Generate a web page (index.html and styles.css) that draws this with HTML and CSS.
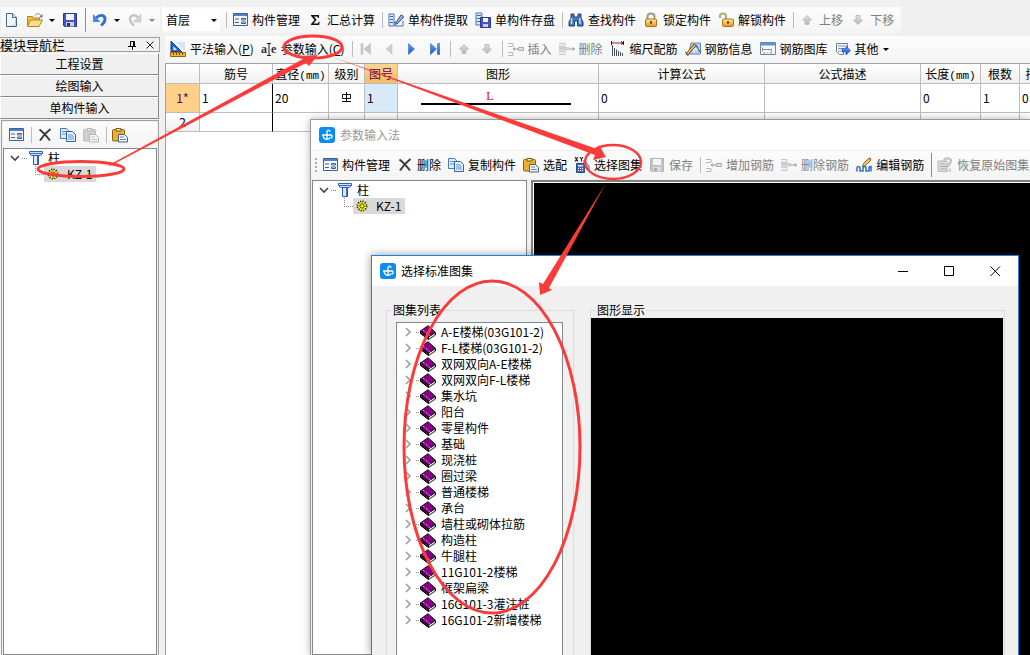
FILE: index.html
```
<!DOCTYPE html>
<html lang="zh-CN">
<head>
<meta charset="utf-8">
<title>钢筋算量</title>
<link rel="stylesheet" href="styles.css">
</head>
<body>
<svg class="defs" width="0" height="0" aria-hidden="true">
  <defs>
    <linearGradient id="gold" x1="0" y1="0" x2="0" y2="1"><stop offset="0" stop-color="#ffe89a"/><stop offset="1" stop-color="#e0961c"/></linearGradient>
    <linearGradient id="blue" x1="0" y1="0" x2="0" y2="1"><stop offset="0" stop-color="#6aa6f5"/><stop offset="1" stop-color="#1450c8"/></linearGradient>
    <linearGradient id="gray" x1="0" y1="0" x2="0" y2="1"><stop offset="0" stop-color="#e2e2e2"/><stop offset="1" stop-color="#b4b4b4"/></linearGradient>
  </defs>
  <symbol id="i-new" viewBox="0 0 16 16"><path d="M2.500 1.500h6l4 4v9h-10z" fill="#f4f9ff" stroke="#4a6488"/><path d="M8.500 1.500v4h4" fill="#cfe0f4" stroke="#4a6488"/><path d="M11.500 7v6.500h-5" fill="none" stroke="#b8d0ec"/></symbol>
  <symbol id="i-open" viewBox="0 0 16 16"><path d="M.5 13.500v-9h5l1 1.500h6v3" fill="#f2c04a" stroke="#b58318"/><path d="M.5 14.500l3-6.500h12l-3.500 6.500z" fill="#ffe08a" stroke="#b58318"/><path d="M8 3.500c2-3 5-2 6 .5" fill="none" stroke="#6a8cb8"/><path d="M15.500 2v3.500h-3.500z" fill="#4a78b4"/></symbol>
  <symbol id="i-save" viewBox="0 0 16 16"><path d="M1.500 1.500h13v13h-12l-1-1z" fill="#4653c4" stroke="#2c3690"/><path d="M4 2h8v6h-8z" fill="#eef4ff"/><path d="M4 10h8v4.500h-8z" fill="#c8d0ea"/><path d="M5 11h3v3.500h-3z" fill="#26306e"/></symbol>
  <symbol id="i-undo" viewBox="0 0 16 16"><path d="M4 6c5-5 9.500-2 9 1.500-.3 3-2 4.500-4 6" fill="none" stroke="#2f6fd0" stroke-width="2.800"/><path d="M1 2v8h7.500z" fill="#4a8ae6"/></symbol>
  <symbol id="i-redo" viewBox="0 0 16 16"><path d="M12 6c-5-5-9.500-2-9 1.500.3 3 2 4.500 4 6" fill="none" stroke="#c4c4c4" stroke-width="2.400"/><path d="M14 2v8h-7.500z" fill="#d4d4d4" stroke="#bbb" stroke-width=".5"/></symbol>
  <symbol id="i-form" viewBox="0 0 16 16"><path d="M1.500 1.500h14v12h-14z" fill="#f4f8ff" stroke="#3d6096"/><path d="M2 2h13v2h-13z" fill="#4f80c8"/><path d="M3 6.500h4v1H3zM3 10h4v1H3z" fill="#3f5f92"/><path d="M9.500 6.500h4v1.500h-4zM9.500 10h4v1.500h-4z" fill="#fff" stroke="#3f5f92"/></symbol>
  <symbol id="i-sigma" viewBox="0 0 16 16"><path d="M4 3h8v3h-1c-.2-1-.6-1.500-1.500-1.500h-2.500l2.500 3.200-3 3.800h3.500c1 0 1.500-.6 1.800-1.800h.9l-.6 3.300h-8.100v-1l3.500-4-3.500-4.300z" fill="#111"/></symbol>
  <symbol id="i-extract" viewBox="0 0 16 16"><path d="M1 2h5v12h-5z" fill="#dcebff" stroke="#4a74b4"/><path d="M2 4.500h3M2 7.500h3M2 10.500h3" stroke="#3a66a8"/><path d="M7 12l6-9c2 0 3 2 2 3l-6 6z" fill="#8eb2e0" stroke="#2f5286"/><path d="M7 9v5h8V9" fill="none" stroke="#4a74b4"/></symbol>
  <symbol id="i-store" viewBox="0 0 16 16"><path d="M1 1h6v12h-6z" fill="#dcebff" stroke="#4a74b4"/><path d="M2 3.500h4M2 6.500h4M2 9.500h4" stroke="#3a66a8"/><path d="M5.500 5.500h10v10h-10z" fill="#4653c4" stroke="#2c3690"/><path d="M8 6h5v4h-5z" fill="#f4f8ff"/><path d="M8 12h5v3h-5z" fill="#c8d0ea"/></symbol>
  <symbol id="i-find" viewBox="0 0 16 16"><path d="M3 2h3v3h4V2h3v4l2 4v4h-5.500V9h-3v5H1v-4l2-4z" fill="#4678ba" stroke="#1f3f74"/><path d="M3.500 6v6M12 6v6" stroke="#b8dbff" stroke-width="1.500"/></symbol>
  <symbol id="i-lock" viewBox="0 0 16 16"><path d="M4.500 8V4.500c0-4 7-4 7 0V8" fill="none" stroke="#a09a88" stroke-width="2"/><rect x="2.500" y="7" width="11" height="7.500" rx="1" fill="url(#gold)" stroke="#a87418"/><path d="M8 9.500v2.500M7 10h2" stroke="#5a3c06" stroke-width="1.300"/></symbol>
  <symbol id="i-unlock" viewBox="0 0 16 16"><path d="M2 6V4c0-3.500 6-3.500 6 0v4" fill="none" stroke="#b7a878" stroke-width="2"/><rect x="4.500" y="7" width="11" height="7.500" rx="1" fill="url(#gold)" stroke="#a87418"/><path d="M10 9.500v2.500M9 10h2" stroke="#5a3c06" stroke-width="1.300"/></symbol>
  <symbol id="i-up" viewBox="0 0 16 16"><path d="M8 3.500l4.500 4.500h-2.500v4.500h-4v-4.500h-2.500z" fill="url(#gray)" stroke="#bdbdbd"/></symbol>
  <symbol id="i-down" viewBox="0 0 16 16"><path d="M8 12.500l4.500-4.500h-2.500v-4.500h-4v4.500h-2.500z" fill="url(#gray)" stroke="#bdbdbd"/></symbol>
  <symbol id="i-ruler" viewBox="0 0 16 16"><path d="M1 0v11h11z" fill="#2e62ba" stroke="#17408c"/><path d="M3.500 5.500v3.500h3.500z" fill="#fff"/><path d="M5 1h10v9h-1z" fill="#d5e4f7"/><path d="M.5 11.500h15v4h-15z" fill="#f0b83c" stroke="#94660c"/><path d="M3.500 12v2M6.500 12v2M9.500 12v2M12.500 12v2" stroke="#6e4800"/></symbol>
  <symbol id="i-first" viewBox="0 0 16 16"><path d="M3 2.500h2v11h-2zM12.500 2.500v11L6 8z" fill="#c8c8c8" stroke="#b8b8b8" stroke-width=".5"/></symbol>
  <symbol id="i-prev" viewBox="0 0 16 16"><path d="M11 3v10L5 8z" fill="#d0d0d0" stroke="#b8b8b8" stroke-width=".5"/></symbol>
  <symbol id="i-next" viewBox="0 0 16 16"><path d="M4.500 2.500v11l6-5.500z" fill="url(#blue)" stroke="#1c5ad0" stroke-width=".5"/></symbol>
  <symbol id="i-last" viewBox="0 0 16 16"><path d="M3.500 2.500v11L9.500 8zM10.500 2.500h2v11h-2z" fill="url(#blue)" stroke="#174eae" stroke-width=".5"/></symbol>
  <symbol id="i-insert" viewBox="0 0 16 16"><path d="M0 2.500h5v3H0M0 11.500h5v3H0" fill="none" stroke="#b8b8b8"/><path d="M5 8h5M7 6.500L5 8l2 1.500" fill="none" stroke="#999"/><path d="M10.500 6.500h5v3h-5z" fill="#e4e4e4" stroke="#aaa"/></symbol>
  <symbol id="i-remove" viewBox="0 0 16 16"><path d="M0 2.500h6v3H0M0 10.500h6v3H0" fill="#eee" stroke="#c8c8c8"/><path d="M0 6h10v3.500H0z" fill="#cecece"/><path d="M10 8h5.500M13.500 6.500l2 1.500-2 1.500" fill="none" stroke="#999"/></symbol>
  <symbol id="i-scale" viewBox="0 0 16 16"><path d="M2.500 4v11M4.500 7v8M6.500 8.500v6.500M8.500 10v5M10.500 11v4M12.500 12v3" stroke="#46505e"/><path d="M2 2h11" stroke="#8a2a1c"/><path d="M1.500 0v4M13.500 0v4M11 .500l2 1.500-2 1.500" fill="none" stroke="#222"/></symbol>
  <symbol id="i-info" viewBox="0 0 16 16"><path d="M6 2h9.500v11H4z" fill="#b7d0f4" stroke="#5e86c2"/><path d="M9 3v9M6 8h9" stroke="#f5faff"/><path d="M1 13L9 3l2 1.500L3 14z" fill="#edc264" stroke="#6a4a1a"/><path d="M0 10.500l3 4M11 4l4 7" stroke="#333"/></symbol>
  <symbol id="i-library" viewBox="0 0 16 16"><path d="M.5 1.500h15v12h-15z" fill="#f6faff" stroke="#6887b4"/><path d="M1 2h14v2.500h-14z" fill="#5c94dc"/><path d="M2.500 8.500h9M2.500 6.500v3.500M11.500 8.500v2" fill="none" stroke="#8a8a8a"/><path d="M3 12h2" stroke="#e85c4c"/><path d="M6.500 12h2" stroke="#e6b430"/><path d="M10 12h2" stroke="#58b458"/></symbol>
  <symbol id="i-other" viewBox="0 0 16 16"><path d="M1.500 2.500h11v7h-4v4h-4l-3-3z" fill="#f4f8ff" stroke="#6f7e94"/><path d="M3 5h8M3 7.500h5M3 10h3" stroke="#8496b4"/><path d="M7 7.500h4V5l4.500 4.500L11 14v-3H7z" fill="url(#blue)" stroke="#1c4ea4" stroke-width=".6"/></symbol>
  <symbol id="i-cross" viewBox="0 0 16 16"><path d="M2.500 2.500c4 3 7 6.500 10.500 11M13.500 2c-4 3-7.500 7-10.500 11.500" fill="none" stroke="#3a3a3a" stroke-width="2"/></symbol>
  <symbol id="i-copy" viewBox="0 0 16 16"><path d="M.5 1.500h6l2 2v8h-8z" fill="#e0edff" stroke="#4878be"/><path d="M6.500 4.500h6l3 3v7h-9z" fill="#e8f2ff" stroke="#2e60ac"/><path d="M2 4.500h4M2 7h4M8 8h5M8 10h6M8 12h6" stroke="#5e8fd4"/></symbol>
  <symbol id="i-paste" viewBox="0 0 16 16"><rect x=".5" y="2.500" width="12" height="11.500" rx="1" fill="#e8b02e" stroke="#8a620e"/><path d="M4 4V1.500h5V4z" fill="#f6e9ae" stroke="#7a5a14"/><path d="M6.500 7.500h6l3 3v4.500h-9z" fill="#eef4ff" stroke="#4a5e80"/><path d="M8 10h4M8 12.500h6" stroke="#6c8ab4"/></symbol>
  <symbol id="i-paste-off" viewBox="0 0 16 16"><rect x=".5" y="2.500" width="12" height="11.500" rx="1" fill="#cfcfcf" stroke="#bdbdbd"/><path d="M4 4V1.500h5V4z" fill="#e8e8e8" stroke="#b8b8b8"/><path d="M6.500 7.500h6l3 3v4.500h-9z" fill="#f4f4f4" stroke="#b4b4b4"/><path d="M8 10h4M8 12.500h6" stroke="#c4c4c4"/></symbol>
  <symbol id="i-xy" viewBox="0 0 16 16"><path d="M1 0l3 4.500M4 0L1 4.500M6 0l1.500 2L9 0M7.500 2v2.500" fill="none" stroke="#222" stroke-width="1.100"/><path d="M10 3l5 6v3l-5-5z" fill="#dfe9f8" stroke="#46648f"/><path d="M2.500 6.500h8v9h-8z" fill="#3e68b0" stroke="#284b88"/><path d="M4 8h5v1.500H4z" fill="#dcebff"/><path d="M4 11.500h5M4 13.500h5" stroke="#fff" stroke-dasharray="1 1"/></symbol>
  <symbol id="i-save-off" viewBox="0 0 16 16"><path d="M1.500 1.500h13v13h-12l-1-1z" fill="#c4c4c4" stroke="#b4b4b4"/><path d="M4 2h8v6h-8z" fill="#f4f4f4"/><path d="M4 10h8v4.500h-8z" fill="#ddd"/><path d="M5 11h3v3h-3z" fill="#aaa"/></symbol>
  <symbol id="i-edit" viewBox="0 0 16 16"><path d="M1 14.500V11c0-2 3-2 3 0v3h3v-3c0-2 3-2 3 0v3h3v-3c0-1 .5-1.500 2-1.500v5" fill="none" stroke="#3a72c4" stroke-width="1.600"/><path d="M6.500 9.500l1-3 5.500-5.500 2 2-5.500 5.500z" fill="#edc65a" stroke="#6a5020" stroke-width=".8"/><path d="M12.500 1.500l1-1 2 1.500-1 1.500z" fill="#d85040"/></symbol>
  <symbol id="i-restore" viewBox="0 0 16 16"><path d="M1 4h9v10.500H1z" fill="#ddd" stroke="#b8b8b8"/><path d="M3 7h5M3 9.500h7M3 12h7" stroke="#aaa"/><path d="M7 4c0-3 7-4 7 0 0 3-3 2-3 6" fill="none" stroke="#c4c4c4" stroke-width="2.400"/><path d="M9 14l5-3v4z" fill="#ccc"/></symbol>
  <symbol id="i-column" viewBox="0 0 16 16"><path d="M1.500 1.500h13v2l-2 2h-9l-2-2z" fill="#cfe2ff" stroke="#2a5cb8"/><path d="M5.500 5.500h5v9h-5z" fill="#dceaff" stroke="#2a5cb8"/><path d="M2 3.500h12M9.500 6v8" stroke="#3a6cc4"/></symbol>
  <symbol id="i-gear" viewBox="0 0 12 12"><circle cx="6" cy="6" r="4.800" fill="#f4ee20" stroke="#222" stroke-dasharray="1.300 1.200" stroke-width="1.300"/><path d="M6 1.500v9M1.500 6h9M3 3l6 6M9 3l-6 6" stroke="#6c6a00" stroke-width=".7"/><circle cx="6" cy="6" r="2" fill="#fff82a" stroke="#333" stroke-width=".7"/></symbol>
  <symbol id="i-app" viewBox="0 0 16 16"><rect width="16" height="16" rx="3" fill="#0b8cf5"/><path d="M8 13V5c0-2.500 3-2.500 3 0M3 8h9c1.500 0 1.500 3 0 3M4 7.500c0 3.500 2 4.800 4 4.800s3-.8 3.500-2" fill="none" stroke="#fff" stroke-width="1.300"/></symbol>
  <symbol id="i-book" viewBox="0 0 16 15"><path d="M.5 6v2.500l8 6 7-4.500V7.500L9 11.500z" fill="#fff" stroke="#111"/><path d="M.5 6v2.200l8 6V12z" fill="#5a005a" stroke="#111"/><path d="M.5 6L8 .700l7.300 6.500L8.500 12z" fill="#840084" stroke="#111"/><path d="M3 5l7 6" stroke="#f0d8f0" stroke-dasharray="1 1"/><path d="M10 13l5-3.500" stroke="#999" stroke-width=".7"/></symbol>
  <symbol id="i-closed" viewBox="0 0 8 10"><path d="M1 1l4 4-4 4" fill="none" stroke="#a0a0a0" stroke-width="1.700"/></symbol>
  <symbol id="i-opened" viewBox="0 0 10 8"><path d="M1 2l4 4 4-4" fill="none" stroke="#444" stroke-width="1.600"/></symbol>
</svg>

<div class="app">
  <header class="topbar">
    <div class="strip quick">
      <button class="tool" aria-label="新建"><svg class="ico"><use href="#i-new"/></svg></button>
      <button class="tool" aria-label="打开"><svg class="ico"><use href="#i-open"/></svg><span class="caret"></span></button>
      <button class="tool" aria-label="保存"><svg class="ico"><use href="#i-save"/></svg></button>
      <span class="sep dark"></span>
      <button class="tool" aria-label="撤销"><svg class="ico"><use href="#i-undo"/></svg><span class="caret"></span></button>
      <button class="tool off" aria-label="恢复"><svg class="ico"><use href="#i-redo"/></svg><span class="caret"></span></button>
    </div>
    <div class="strip main-tools">
      <span class="floor"><select aria-label="楼层"><option>首层</option></select><span class="caret"></span></span>
      <span class="sep"></span>
      <button class="tool"><svg class="ico"><use href="#i-form"/></svg>构件管理</button>
      <button class="tool"><svg class="ico"><use href="#i-sigma"/></svg>汇总计算</button>
      <span class="sep"></span>
      <button class="tool"><svg class="ico"><use href="#i-extract"/></svg>单构件提取</button>
      <button class="tool"><svg class="ico"><use href="#i-store"/></svg>单构件存盘</button>
      <span class="sep"></span>
      <button class="tool"><svg class="ico"><use href="#i-find"/></svg>查找构件</button>
      <button class="tool"><svg class="ico"><use href="#i-lock"/></svg>锁定构件</button>
      <button class="tool"><svg class="ico"><use href="#i-unlock"/></svg>解锁构件</button>
      <span class="sep"></span>
      <button class="tool off"><svg class="ico"><use href="#i-up"/></svg>上移</button>
      <button class="tool off"><svg class="ico"><use href="#i-down"/></svg>下移</button>
    </div>
  </header>

  <div class="work">
    <aside class="nav">
      <div class="nav-head"><span class="nav-name">模块导航栏</span>
        <button class="mini" aria-label="固定"><svg width="10" height="12"><path d="M3.500 7V2.500h4V7M6.500 2.500V7M1 7.500h8M5.500 8v3" fill="none" stroke="#000"/></svg></button>
        <button class="mini" aria-label="关闭"><svg width="10" height="12"><path d="M1.500 2.500l7 7M8.500 2.500l-7 7" stroke="#222"/></svg></button>
      </div>
      <button class="nav-btn">工程设置</button>
      <button class="nav-btn">绘图输入</button>
      <button class="nav-btn">单构件输入</button>
      <div class="nav-body">
        <div class="strip nav-tools">
          <button class="tool" aria-label="构件管理"><svg class="ico"><use href="#i-form"/></svg></button>
          <span class="sep"></span>
          <button class="tool" aria-label="删除"><svg class="ico"><use href="#i-cross"/></svg></button>
          <button class="tool" aria-label="复制"><svg class="ico"><use href="#i-copy"/></svg></button>
          <button class="tool off" aria-label="粘贴"><svg class="ico"><use href="#i-paste-off"/></svg></button>
          <span class="sep"></span>
          <button class="tool" aria-label="选配"><svg class="ico"><use href="#i-paste"/></svg></button>
        </div>
        <div class="tree">
          <div class="node"><svg class="chev"><use href="#i-opened"/></svg><span class="dots"></span><svg class="ico"><use href="#i-column"/></svg><span class="node-text">柱</span></div>
          <div class="node child"><span class="elbow"></span><span class="picked"><svg class="gear"><use href="#i-gear"/></svg>KZ-1</span></div>
        </div>
      </div>
    </aside>

    <main class="content">
      <div class="strip bar-tools">
        <button class="tool"><svg class="ico"><use href="#i-ruler"/></svg><span>平法输入(<u>P</u>)</span></button>
        <button class="tool"><svg class="ico"><text x="0" y="12" class="glyph">a</text><text x="10" y="12" class="glyph">e</text><path d="M6 2.500h4M8 2.500v12M6 14.500h4" stroke="#222"/></svg><span>参数输入(<u>C</u>)</span></button>
        <span class="sep"></span>
        <button class="tool off" aria-label="第一条"><svg class="ico"><use href="#i-first"/></svg></button>
        <button class="tool off" aria-label="上一条"><svg class="ico"><use href="#i-prev"/></svg></button>
        <button class="tool" aria-label="下一条"><svg class="ico"><use href="#i-next"/></svg></button>
        <button class="tool" aria-label="最后一条"><svg class="ico"><use href="#i-last"/></svg></button>
        <span class="sep"></span>
        <button class="tool off" aria-label="上移行"><svg class="ico"><use href="#i-up"/></svg></button>
        <button class="tool off" aria-label="下移行"><svg class="ico"><use href="#i-down"/></svg></button>
        <span class="sep"></span>
        <button class="tool off"><svg class="ico"><use href="#i-insert"/></svg>插入</button>
        <button class="tool off"><svg class="ico"><use href="#i-remove"/></svg>删除</button>
        <button class="tool"><svg class="ico"><use href="#i-scale"/></svg>缩尺配筋</button>
        <button class="tool"><svg class="ico"><use href="#i-info"/></svg>钢筋信息</button>
        <button class="tool"><svg class="ico"><use href="#i-library"/></svg>钢筋图库</button>
        <button class="tool"><svg class="ico"><use href="#i-other"/></svg>其他<span class="caret tight"></span></button>
      </div>
      <div class="sheet">
        <table class="grid">
          <colgroup><col class="w-num"><col class="w-name"><col class="w-dia"><col class="w-lvl"><col class="w-fig"><col class="w-shape"><col class="w-calc"><col class="w-desc"><col class="w-len"><col class="w-cnt"><col class="w-lap"></colgroup>
          <thead><tr><th></th><th>筋号</th><th>直径<span class="unit">(mm)</span></th><th>级别</th><th class="hot">图号</th><th>图形</th><th>计算公式</th><th>公式描述</th><th>长度<span class="unit">(mm)</span></th><th>根数</th><th>搭接</th></tr></thead>
          <tbody>
            <tr class="tall"><th class="current">1*</th><td class="edge">1</td><td>20</td><td class="mid"><svg width="11" height="12" role="img" aria-label="三级钢"><path d="M5.500 1v9M1.500 3.500h8v4h-8zM1 10.500h9" fill="none" stroke="#111"/></svg></td><td class="cell-on">1</td><td><div class="bar"><span>L</span></div></td><td>0</td><td></td><td>0</td><td>1</td><td>0</td></tr>
            <tr class="low"><th>2</th><td class="edge"></td><td></td><td></td><td></td><td></td><td></td><td></td><td></td><td></td><td></td></tr>
          </tbody>
        </table>
      </div>
    </main>
  </div>

  <section class="window param" aria-label="参数输入法">
    <div class="caption faded"><svg class="ico"><use href="#i-app"/></svg><span>参数输入法</span></div>
    <div class="strip param-tools">
      <span class="grip"></span>
      <button class="tool"><svg class="ico"><use href="#i-form"/></svg>构件管理</button>
      <button class="tool"><svg class="ico"><use href="#i-cross"/></svg>删除</button>
      <button class="tool"><svg class="ico"><use href="#i-copy"/></svg>复制构件</button>
      <button class="tool"><svg class="ico"><use href="#i-paste"/></svg>选配</button>
      <button class="tool"><svg class="ico"><use href="#i-xy"/></svg>选择图集</button>
      <button class="tool off"><svg class="ico"><use href="#i-save-off"/></svg>保存</button>
      <span class="sep"></span>
      <button class="tool off"><svg class="ico"><use href="#i-insert"/></svg>增加钢筋</button>
      <button class="tool off"><svg class="ico"><use href="#i-remove"/></svg>删除钢筋</button>
      <button class="tool"><svg class="ico"><use href="#i-edit"/></svg>编辑钢筋</button>
      <span class="sep dark"></span>
      <button class="tool off"><svg class="ico"><use href="#i-restore"/></svg>恢复原始图集</button>
    </div>
    <div class="panes">
      <div class="tree">
        <div class="node"><svg class="chev"><use href="#i-opened"/></svg><span class="dots"></span><svg class="ico"><use href="#i-column"/></svg><span class="node-text">柱</span></div>
        <div class="node child"><span class="elbow"></span><span class="picked"><svg class="gear"><use href="#i-gear"/></svg>KZ-1</span></div>
      </div>
      <div class="canvas"></div>
    </div>
  </section>

  <section class="window atlas" role="dialog" aria-label="选择标准图集">
    <div class="caption"><svg class="ico"><use href="#i-app"/></svg><span>选择标准图集</span>
      <div class="controls">
        <button aria-label="最小化"><svg width="11" height="11"><path d="M0 5.500h10" stroke="#000"/></svg></button>
        <button aria-label="最大化"><svg width="11" height="11"><path d="M.5.500h9v9h-9z" fill="none" stroke="#000"/></svg></button>
        <button aria-label="关闭"><svg width="11" height="11"><path d="M.5.500l9.500 9.500M10 .500l-9.500 9.500" stroke="#000"/></svg></button>
      </div>
    </div>
    <div class="atlas-body">
      <fieldset class="group list-group"><legend>图集列表</legend>
        <ul class="books">
          <li><svg class="shut"><use href="#i-closed"/></svg><span class="twig"></span><svg class="book"><use href="#i-book"/></svg>A-E楼梯(03G101-2)</li>
          <li><svg class="shut"><use href="#i-closed"/></svg><span class="twig"></span><svg class="book"><use href="#i-book"/></svg>F-L楼梯(03G101-2)</li>
          <li><svg class="shut"><use href="#i-closed"/></svg><span class="twig"></span><svg class="book"><use href="#i-book"/></svg>双网双向A-E楼梯</li>
          <li><svg class="shut"><use href="#i-closed"/></svg><span class="twig"></span><svg class="book"><use href="#i-book"/></svg>双网双向F-L楼梯</li>
          <li><svg class="shut"><use href="#i-closed"/></svg><span class="twig"></span><svg class="book"><use href="#i-book"/></svg>集水坑</li>
          <li><svg class="shut"><use href="#i-closed"/></svg><span class="twig"></span><svg class="book"><use href="#i-book"/></svg>阳台</li>
          <li><svg class="shut"><use href="#i-closed"/></svg><span class="twig"></span><svg class="book"><use href="#i-book"/></svg>零星构件</li>
          <li><svg class="shut"><use href="#i-closed"/></svg><span class="twig"></span><svg class="book"><use href="#i-book"/></svg>基础</li>
          <li><svg class="shut"><use href="#i-closed"/></svg><span class="twig"></span><svg class="book"><use href="#i-book"/></svg>现浇桩</li>
          <li><svg class="shut"><use href="#i-closed"/></svg><span class="twig"></span><svg class="book"><use href="#i-book"/></svg>圈过梁</li>
          <li><svg class="shut"><use href="#i-closed"/></svg><span class="twig"></span><svg class="book"><use href="#i-book"/></svg>普通楼梯</li>
          <li><svg class="shut"><use href="#i-closed"/></svg><span class="twig"></span><svg class="book"><use href="#i-book"/></svg>承台</li>
          <li><svg class="shut"><use href="#i-closed"/></svg><span class="twig"></span><svg class="book"><use href="#i-book"/></svg>墙柱或砌体拉筋</li>
          <li><svg class="shut"><use href="#i-closed"/></svg><span class="twig"></span><svg class="book"><use href="#i-book"/></svg>构造柱</li>
          <li><svg class="shut"><use href="#i-closed"/></svg><span class="twig"></span><svg class="book"><use href="#i-book"/></svg>牛腿柱</li>
          <li><svg class="shut"><use href="#i-closed"/></svg><span class="twig"></span><svg class="book"><use href="#i-book"/></svg>11G101-2楼梯</li>
          <li><svg class="shut"><use href="#i-closed"/></svg><span class="twig"></span><svg class="book"><use href="#i-book"/></svg>框架扁梁</li>
          <li><svg class="shut"><use href="#i-closed"/></svg><span class="twig"></span><svg class="book"><use href="#i-book"/></svg>16G101-3灌注桩</li>
          <li><svg class="shut"><use href="#i-closed"/></svg><span class="twig"></span><svg class="book"><use href="#i-book"/></svg>16G101-2新增楼梯</li>
        </ul>
      </fieldset>
      <fieldset class="group view-group"><legend>图形显示</legend>
        <div class="preview"></div>
      </fieldset>
    </div>
  </section>

  <svg class="marks" width="1030" height="655" aria-hidden="true">
    <g fill="none" stroke="#fb3b3a" stroke-width="3">
      <ellipse cx="81" cy="169" rx="43" ry="7.500"/>
      <ellipse cx="313" cy="47" rx="29" ry="11"/>
      <ellipse cx="613" cy="162" rx="28" ry="17" stroke-width="2.500"/>
      <ellipse cx="492" cy="447" rx="88" ry="166"/>
    </g>
    <g fill="#fb3b3a">
      <path d="M109 165L303 59 300 56 318 55 309 66 306 63 110 166z"/>
      <path d="M330 56L597 149 599 145 606 157 593 160 595 155z"/>
      <path d="M606 183L549 288 552 290 540 295 539 282 543 284z"/>
    </g>
  </svg>
</div>
</body>
</html>
```
FILE: styles.css
```
* { box-sizing: border-box; }
body {
  margin: 0;
  background: #f0f0f0;
  color: #000;
  font: 12px/16px "Noto Sans CJK SC", "Liberation Sans", sans-serif;
}
button, select, fieldset { font: inherit; color: inherit; }
button { margin: 0; padding: 0; border: 0; background: none; }
.defs { display: block; }
.glyph { font: bold 12px "Liberation Serif", serif; fill: #333; }

.app { position: relative; display: flex; flex-direction: column; height: 100vh; overflow: hidden; }

/* tool strips */
.topbar { display: flex; gap: 2px; padding: 7px 0 3px 1px; }
.strip {
  display: flex;
  align-items: center;
  height: 26px;
  background: linear-gradient(#fcfcfc, #f4f4f4);
  white-space: nowrap;
}
.tool { display: flex; align-items: center; gap: 4px; flex: none; margin-right: 7px; }
.off { color: #808080; }
.ico { width: 16px; height: 16px; flex: none; }
.sep { flex: none; width: 1px; height: 16px; margin-right: 5px; background: #bcbcbc; }
.dark { height: 24px; background: #8c8c8c; }
.caret { flex: none; margin-left: 2px; border: 3px solid transparent; border-top-color: #000; border-bottom-width: 0; }
.tight { margin-left: 0; }
.off .caret { border-top-color: #888; }
.quick { width: 159px; padding-left: 3px; }
.quick .sep { margin-right: 6px; }
.floor { display: flex; align-items: center; height: 22px; width: 58px; margin-right: 6px; padding-right: 3px; background: #fff; }
.floor select { flex: 1; width: 40px; padding: 0 0 0 4px; border: 0; background: none; appearance: none; }

.work { flex: 1; display: flex; min-height: 0; }

/* navigation */
.nav { width: 160px; flex: none; display: flex; flex-direction: column; }
.nav-head { display: flex; align-items: center; height: 15px; margin: 1px 0; border: 1px solid #a0a0a0; border-left: 0; font-size: 13px; }
.nav-name { flex: 1; }
.mini { display: flex; width: 18px; justify-content: center; }
.nav-btn { flex: none; height: 22px; border: 1px solid #fff; border-right-color: #888; border-bottom-color: #888; margin-right: 1px; background: #f0f0f0; }
.nav-body { flex: 1; display: flex; flex-direction: column; margin: 1px 1px 0; padding: 1px 1px 0; border: 1px solid #a0a0a0; border-bottom: 0; }
.nav-tools { padding-left: 5px; }
.nav .tree { flex: 1; }

.tree { background: #fff; border: 1px solid #828790; padding-top: 1px; }
.node { display: flex; align-items: center; height: 16px; padding-left: 6px; }
.chev { width: 10px; height: 8px; }
.dots { width: 5px; margin: 0 1px 0 2px; border-top: 1px dotted #888; }
.node-text { padding-left: 4px; }
.child { padding-left: 31px; }
.elbow { width: 9px; height: 9px; align-self: flex-start; border: 1px dotted #888; border-width: 0 0 1px 1px; }
.picked { display: flex; align-items: center; gap: 8px; height: 16px; padding: 0 4px 0 3px; background: #d9d9d9; }
.gear { width: 12px; height: 12px; }

/* rebar sheet */
.content { flex: 1; display: flex; flex-direction: column; min-width: 0; padding-left: 5px; }
.bar-tools { padding-left: 5px; }
.sheet { flex: 1; overflow: hidden; margin-top: 1px; border: 1px solid #a0a0a0; border-width: 1px 0 0 1px; background: #fff; }
.grid { width: 890px; table-layout: fixed; border-collapse: separate; border-spacing: 0; }
.grid th, .grid td { height: 20px; padding: 0; border: 1px solid #bdbdbd; border-width: 0 1px 1px 0; font-weight: normal; white-space: nowrap; }
.grid th { background: linear-gradient(#fff, #f0f0f0); }
.grid td { padding-left: 2px; text-align: left; }
.grid .tall th, .grid .tall td { height: 29px; }
.grid .low th, .grid .low td { height: 19px; }
.grid .hot { background: linear-gradient(#fbd596, #f4bd62); color: #5c0050; }
.grid .current { background: #fdd08a; color: #5c0050; }
.grid .cell-on { background: #d8e9f8; }
.grid .edge { border-right-color: #000; }
.grid .mid { text-align: center; padding: 0; }
.unit { font: 11px "Liberation Mono", monospace; }
.bar { margin: 0 27px 0 21px; height: 14px; border-bottom: 2px solid #000; text-align: center; color: #f00000; font: 12px/10px "Liberation Serif", serif; }
.bar span { margin-right: 12px; }
.w-num { width: 34px; } .w-name { width: 73px; } .w-dia { width: 56px; } .w-lvl { width: 36px; }
.w-fig { width: 33px; } .w-shape { width: 201px; } .w-calc { width: 166px; } .w-desc { width: 156px; }
.w-len { width: 60px; } .w-cnt { width: 39px; } .w-lap { width: 36px; }

/* floating windows */
.window { position: absolute; display: flex; flex-direction: column; bottom: 0; background: #f0f0f0; }
.caption { display: flex; align-items: center; flex: none; height: 30px; padding-left: 8px; gap: 5px; background: #fff; }
.faded { color: #999; }
.param { left: 310px; top: 119px; right: 0; border: 1px solid #999; border-width: 1px 0 0 1px; box-shadow: 0 0 8px rgba(0, 0, 0, .3); }
.param-tools { height: 29px; border-top: 1px solid #eee; padding-left: 4px; overflow: hidden; }
.grip { width: 2px; height: 14px; margin-right: 5px; border-left: 2px dotted #aaa; }
.panes { flex: 1; display: flex; gap: 4px; padding: 1px 0 0 1px; }
.panes .tree { width: 215px; }
.canvas { flex: 1; background: #000; border: 2px solid #808080; border-width: 2px 0 0 2px; box-shadow: inset 1px 1px #fff; }

.atlas { left: 371px; top: 255px; right: 11px; border: 1px solid #1883d7; border-bottom: 0; box-shadow: 0 0 9px rgba(0, 0, 0, .4); }
.controls { display: flex; margin-left: auto; }
.controls button { display: flex; align-items: center; justify-content: center; width: 46px; height: 30px; }
.atlas-body { flex: 1; display: flex; gap: 16px; min-height: 0; padding: 16px 13px 0 14px; }
.group { min-width: 0; margin: 0; padding: 0; border: 1px solid #dcdcdc; border-bottom: 0; }
.group legend { margin-left: 4px; padding: 0 2px; }
.list-group { width: 188px; padding-top: 4px; }
.view-group { flex: 1; padding-right: 1px; }
.books { height: 100%; margin: 0 10px 0 9px; padding: 1px 0 0; list-style: none; border: 1px solid #828790; border-bottom: 0; background: #fff; }
.books li { display: flex; align-items: center; height: 16px; padding-left: 8px; white-space: nowrap; }
.shut { width: 8px; height: 10px; }
.twig { width: 3px; margin: 0 1px 0 3px; border-top: 1px dotted #888; }
.book { width: 16px; height: 15px; margin-right: 5px; }
.preview { height: 100%; background: #000; }

.marks { position: absolute; left: 0; top: 0; pointer-events: none; }
```
